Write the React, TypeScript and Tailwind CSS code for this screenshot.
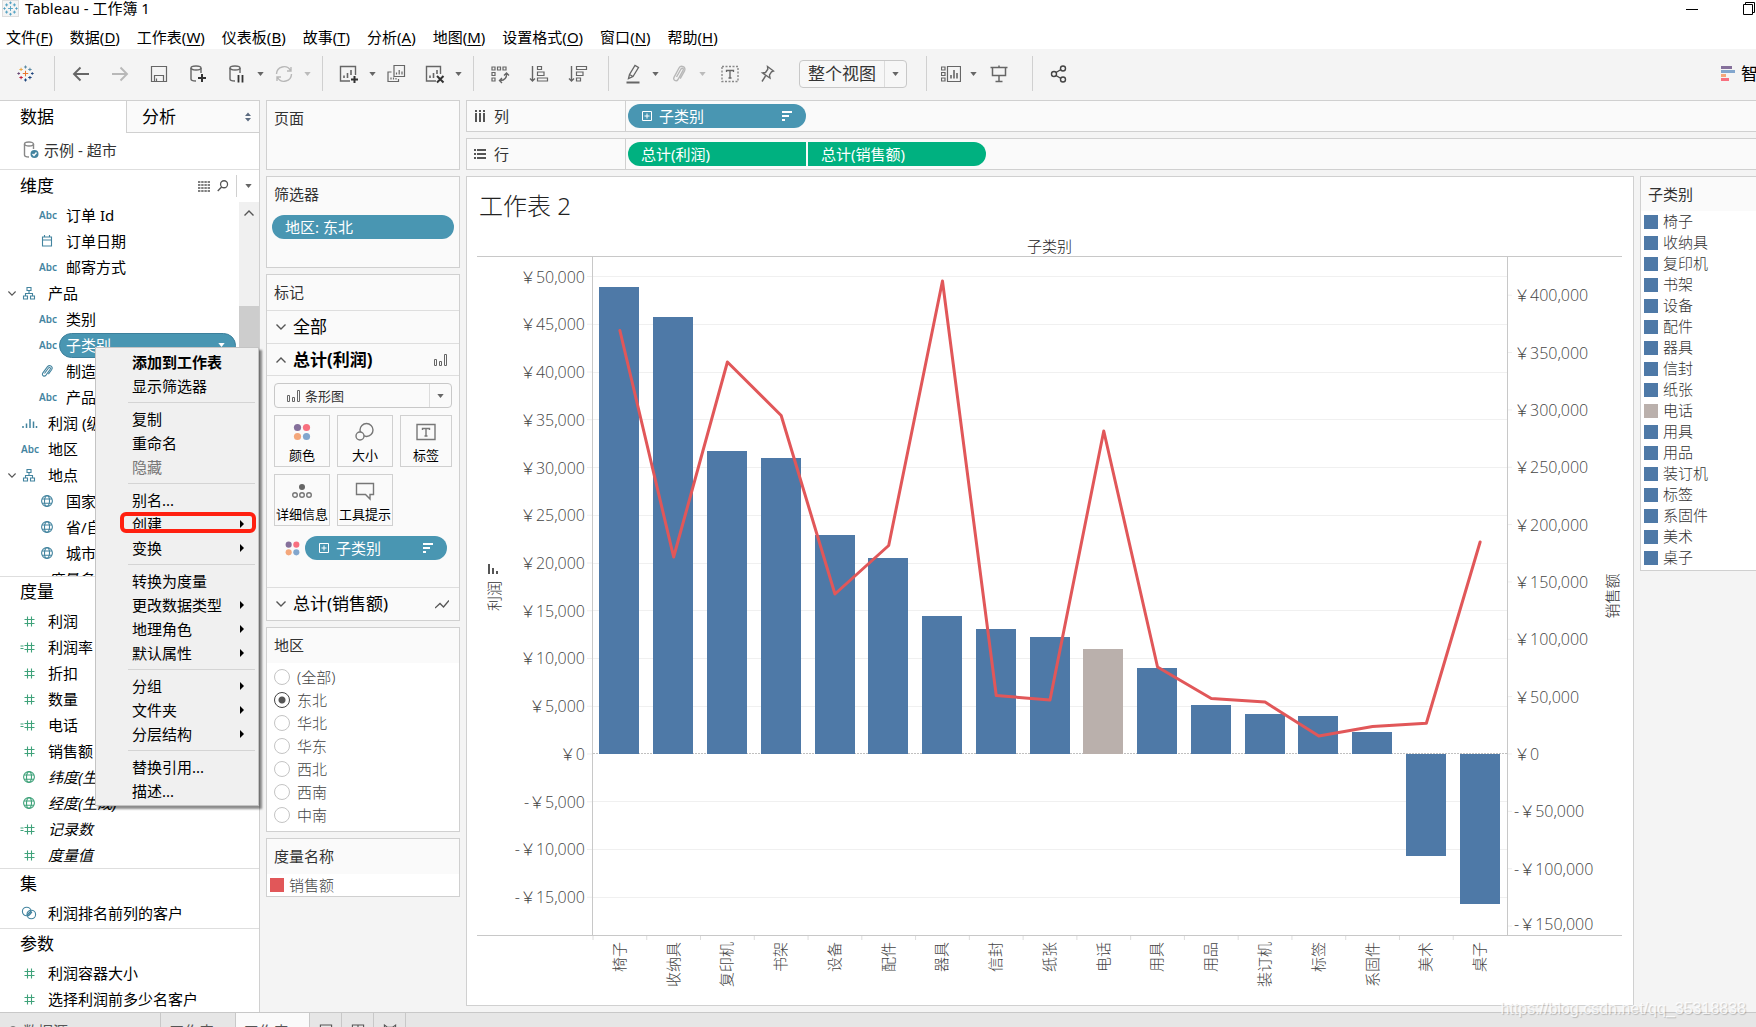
import React, { useState } from 'react';

type IconProps = { className?: string; children: React.ReactNode };

const Icon: React.FC<IconProps> = ({ className = 'size-5', children }) => (
    <svg viewBox="0 0 20 20" className={className} fill="none" stroke="currentColor" strokeWidth="1.4" aria-hidden="true">
        {children}
    </svg>
);

const Caret: React.FC<{ className?: string }> = ({ className = 'text-[#666]' }) => (
    <svg viewBox="0 0 8 5" className={`w-[7px] h-1 shrink-0 ${className}`} aria-hidden="true">
        <path d="M0 0h8L4 5z" fill="currentColor" />
    </svg>
);

const cross = (x: number, y: number, r: number, color: string) => (
    <path key={`${x}-${y}`} d={`M${x - r} ${y}h${2 * r}M${x} ${y - r}v${2 * r}`} stroke={color} strokeWidth="1.2" />
);

const Logo: React.FC<{ className?: string; colors: string[] }> = ({ className = 'size-5', colors }) => (
    <Icon className={className}>
        {cross(10, 10, 3.2, colors[0])}
        {cross(4.8, 5.2, 2, colors[1])}
        {cross(15.2, 5.2, 2, colors[2])}
        {cross(4.8, 14.8, 2, colors[3])}
        {cross(15.2, 14.8, 2, colors[4])}
        {cross(10, 2.4, 1.8, colors[2])}
        {cross(10, 17.6, 1.8, colors[4])}
        {cross(2, 10, 1.6, colors[5])}
        {cross(18, 10, 1.6, colors[4])}
    </Icon>
);

const BarsIcon: React.FC<{ className?: string }> = ({ className = 'size-4' }) => (
    <svg viewBox="0 0 16 16" className={`shrink-0 ${className}`} fill="none" stroke="#666" aria-hidden="true">
        <path d="M1.5 7.5h2v6h-2zM6.5 9.5h2v4h-2zM11.5 2.5h2v11h-2z" />
    </svg>
);

const FourDots: React.FC<{ className?: string }> = ({ className = 'size-5' }) => (
    <svg viewBox="0 0 20 20" className={`shrink-0 ${className}`} aria-hidden="true">
        <circle cx="5.5" cy="5.5" r="3.6" fill="#85709b" />
        <circle cx="14.5" cy="5.5" r="3.6" fill="#f8707f" />
        <circle cx="5.5" cy="14.5" r="3.6" fill="#f4a77b" />
        <circle cx="14.5" cy="14.5" r="3.6" fill="#82a6cd" />
    </svg>
);

const Chevron: React.FC<{ up?: boolean; className?: string }> = ({ up, className = 'w-[10px] h-[6px]' }) => (
    <svg viewBox="0 0 10 6" className={`shrink-0 ${className}`} fill="none" stroke="#555" strokeWidth="1.4" aria-hidden="true">
        <path d={up ? 'M.5 5.5L5 1l4.5 4.5' : 'M.5.5L5 5 9.5.5'} />
    </svg>
);

const FieldIcon: React.FC<{ kind: string }> = ({ kind }) => {
    if (kind === 'abc') {
        return <span className="w-[18px] text-[10px] leading-4 font-semibold text-[#43849f]">Abc</span>;
    }
    const color = kind.startsWith('m-') ? 'text-[#3fa27a]' : 'text-[#43849f]';
    return (
        <svg viewBox="0 0 16 16" className={`size-4 shrink-0 overflow-visible ${color}`} fill="none" stroke="currentColor" strokeWidth="1.1" aria-hidden="true">
            {kind === 'date' && <path d="M3.5 4h9v9h-9zM3.5 7h9M5.5 2v2M10.5 2v2" />}
            {kind === 'tree' && <path d="M6 2.5h4v3H6zM2.5 11h4v3h-4zM9.5 11h4v3h-4zM8 5.500v3M4.500 11V8.500h7V11" />}
            {kind === 'clip' && <path d="M5.500 10.500l4-5.500c1-1.300 2.600 0 1.700 1.300l-4.200 5.800c-1.700 2.200-4.800.2-3.100-2.200l4.600-6.200c2.300-2.600 6 .2 4.100 3l-3.200 4.400" />}
            {kind === 'bars' && <path d="M2 13v-2M5.500 13V8.500M9 13V4M12.500 13V6.500M15.500 13v-2" strokeWidth="1.5" />}
            {kind.endsWith('globe') && (
                <>
                    <circle cx="8" cy="8" r="5.400" />
                    <ellipse cx="8" cy="8" rx="2.500" ry="5.400" />
                    <path d="M3 6h10M3 10.200h10" />
                </>
            )}
            {kind.endsWith('num') && <path d="M6.500 3.500v10M10.500 3.500v10M3.500 6.500h10M3.500 10.500h10" />}
            {kind === 'm-calcnum' && <path d="M-.5 7h3M-.5 9.500h3" />}
            {kind === 'set' && (
                <>
                    <circle cx="5.700" cy="6.500" r="4.300" />
                    <circle cx="10.300" cy="9.500" r="4.300" />
                    <path d="M6 10l4-4M7 11l4-4" />
                </>
            )}
        </svg>
    );
};

type Field = { name: string; icon: string; level: number; italic?: boolean; open?: boolean };

const DIMENSIONS: Field[] = [
    { name: '订单 Id', icon: 'abc', level: 1 },
    { name: '订单日期', icon: 'date', level: 1 },
    { name: '邮寄方式', icon: 'abc', level: 1 },
    { name: '产品', icon: 'tree', level: 0, open: true },
    { name: '类别', icon: 'abc', level: 1 },
    { name: '子类别', icon: 'abc', level: 1 },
    { name: '制造商', icon: 'clip', level: 1 },
    { name: '产品名称', icon: 'abc', level: 1 },
    { name: '利润 (级)', icon: 'bars', level: 0 },
    { name: '地区', icon: 'abc', level: 0 },
    { name: '地点', icon: 'tree', level: 0, open: true },
    { name: '国家', icon: 'globe', level: 1 },
    { name: '省/自治区', icon: 'globe', level: 1 },
    { name: '城市', icon: 'globe', level: 1 },
    { name: '度量名称', icon: '', level: 0, italic: true },
];

const MEASURES: Field[] = [
    { name: '利润', icon: 'm-num', level: 0 },
    { name: '利润率', icon: 'm-calcnum', level: 0 },
    { name: '折扣', icon: 'm-num', level: 0 },
    { name: '数量', icon: 'm-num', level: 0 },
    { name: '电话', icon: 'm-calcnum', level: 0 },
    { name: '销售额', icon: 'm-num', level: 0 },
    { name: '纬度(生成)', icon: 'm-globe', level: 0, italic: true },
    { name: '经度(生成)', icon: 'm-globe', level: 0, italic: true },
    { name: '记录数', icon: 'm-calcnum', level: 0, italic: true },
    { name: '度量值', icon: 'm-num', level: 0, italic: true },
];

const SETS: Field[] = [{ name: '利润排名前列的客户', icon: 'set', level: 0 }];

const PARAMETERS: Field[] = [
    { name: '利润容器大小', icon: 'm-num', level: 0 },
    { name: '选择利润前多少名客户', icon: 'm-num', level: 0 },
];

const MENUS = [
    ['文件', 'F'], ['数据', 'D'], ['工作表', 'W'], ['仪表板', 'B'], ['故事', 'T'],
    ['分析', 'A'], ['地图', 'M'], ['设置格式', 'O'], ['窗口', 'N'], ['帮助', 'H'],
];

type MenuEntry = { label: string; bold?: boolean; disabled?: boolean; sub?: boolean; marked?: boolean };

const CONTEXT_MENU: MenuEntry[][] = [
    [{ label: '添加到工作表', bold: true }, { label: '显示筛选器' }],
    [{ label: '复制' }, { label: '重命名' }, { label: '隐藏', disabled: true }],
    [{ label: '别名...' }, { label: '创建', sub: true, marked: true }, { label: '变换', sub: true }],
    [{ label: '转换为度量' }, { label: '更改数据类型', sub: true }, { label: '地理角色', sub: true }, { label: '默认属性', sub: true }],
    [{ label: '分组', sub: true }, { label: '文件夹', sub: true }, { label: '分层结构', sub: true }],
    [{ label: '替换引用...' }, { label: '描述...' }],
];

const DATA = [
    { name: '椅子', profit: 48900, sales: 369200 },
    { name: '收纳具', profit: 45760, sales: 171750 },
    { name: '复印机', profit: 31730, sales: 341760 },
    { name: '书架', profit: 31000, sales: 295100 },
    { name: '设备', profit: 22930, sales: 139500 },
    { name: '配件', profit: 20520, sales: 181780 },
    { name: '器具', profit: 14450, sales: 412400 },
    { name: '信封', profit: 13090, sales: 51000 },
    { name: '纸张', profit: 12250, sales: 47100 },
    { name: '电话', profit: 11000, sales: 281600 },
    { name: '用具', profit: 9000, sales: 75850 },
    { name: '用品', profit: 5130, sales: 48400 },
    { name: '装订机', profit: 4190, sales: 45300 },
    { name: '标签', profit: 3980, sales: 15700 },
    { name: '系固件', profit: 2300, sales: 24000 },
    { name: '美术', profit: -10680, sales: 26800 },
    { name: '桌子', profit: -15700, sales: 184800 },
];

const REGIONS = ['(全部)', '东北', '华北', '华东', '西北', '西南', '中南'];

const PROFIT_TICKS = [50, 45, 40, 35, 30, 25, 20, 15, 10, 5, 0, -5, -10, -15].map(n => n * 1000);
const SALES_TICKS = [400, 350, 300, 250, 200, 150, 100, 50, 0, -50, -100, -150].map(n => n * 1000);

const profitY = (v: number) => ((52042 - v) / 70995) * 100;
const salesY = (v: number) => ((433304 - v) / 591107) * 100;
// keeps the lowest label inside the plot
const labelY = (y: number) => Math.min(y, 98.4);
const yen = (v: number) => `${v < 0 ? '-' : ''}\uFFE5${Math.abs(v).toLocaleString('en-US')}`;
const barColor = (name: string) => (name === '电话' ? '#bab0ac' : '#4e79a7');

const ToolButton: React.FC<{ label: string; className?: string; children: React.ReactNode }> = ({ label, className = 'w-[39px] text-[#666]', children }) => (
    <button type="button" aria-label={label} className={`h-8 flex shrink-0 items-center justify-center ${className}`}>
        {children}
    </button>
);

const MoreButton: React.FC<{ label: string; muted?: boolean }> = ({ label, muted }) => (
    <button type="button" aria-label={label} className="w-2 h-8 flex shrink-0 items-center justify-center">
        <Caret className={muted ? 'text-[#bbb]' : 'text-[#666]'} />
    </button>
);

const ToolDivider: React.FC = () => <span className="w-px h-[35px] ml-[11px] mr-1.5 shrink-0 bg-[#d0d0d0]" />;

const DatabaseShape = () => (
    <>
        <ellipse cx="8" cy="4" rx="5" ry="2" />
        <path d="M3 4v11c0 1.200 2 2 5 2M13 4v5" />
    </>
);

const Toolbar: React.FC = () => (
    <div role="toolbar" className="h-[51px] pb-0.5 shrink-0 flex items-center bg-[#f4f4f4] overflow-hidden">
        <button type="button" aria-label="开始页面" className="w-[43px] pl-2 flex shrink-0 justify-center">
            <Logo className="size-[17px]" colors={['#e8762d', '#eba844', '#5c8ba5', '#c72037', '#1f457e', '#6a4a77']} />
        </button>
        <ToolDivider />
        <ToolButton label="撤消">
            <Icon><path d="M18 10H3M9.500 3.500L3 10l6.500 6.500" strokeWidth="1.900" /></Icon>
        </ToolButton>
        <ToolButton label="重做" className="w-[39px] text-[#b8b8b8]">
            <Icon><path d="M2 10h15M10.500 3.500L17 10l-6.500 6.500" strokeWidth="1.900" /></Icon>
        </ToolButton>
        <ToolButton label="保存">
            <Icon><path d="M2.500 2.500h15v15h-15zM5.500 17v-5.500h9V17M7.500 17v-2.500" strokeWidth="1.200" /></Icon>
        </ToolButton>
        <ToolButton label="新建数据源">
            <Icon><DatabaseShape /><path d="M14 10v8M10 14h8" stroke="#333" strokeWidth="2" /></Icon>
        </ToolButton>
        <ToolButton label="暂停自动更新">
            <Icon><DatabaseShape /><path d="M11.500 11v7.500M15.500 11v7.500" stroke="#333" strokeWidth="1.800" /></Icon>
        </ToolButton>
        <MoreButton label="更新选项" />
        <ToolButton label="刷新" className="w-[39px] text-[#b8b8b8]">
            <Icon><path d="M2.500 10a7.500 7.500 0 0 1 14-3.500M17.500 10a7.500 7.500 0 0 1-14 3.500M17 3v4h-4M3 17v-4h4" /></Icon>
        </ToolButton>
        <MoreButton label="刷新选项" muted />
        <ToolDivider />
        <ToolButton label="新建工作表">
            <Icon><path d="M11 17H1.500V2.500h15V11" /><path d="M5 14v-2.500M8.500 14V9M12 11V6" strokeWidth="1.600" /><path d="M15.500 12v7M12 15.500h7" stroke="#333" strokeWidth="2" /></Icon>
        </ToolButton>
        <MoreButton label="新建选项" />
        <ToolButton label="复制工作表">
            <Icon><path d="M8 1.500h10.500v11H8zM5.500 8H2v9.500h10.500V15" strokeWidth="1.200" /><path d="M10.500 10.500v-2M13.200 10.500V6M16 10.500v-3M5 15.500v-2M7.500 15.500v-2M10 15.500v-1.500" strokeWidth="1.200" /></Icon>
        </ToolButton>
        <ToolButton label="清除工作表">
            <Icon><path d="M11 17H1.500V2.500h14V10" /><path d="M5 14v-2.500M8.500 14V9M12 10V6" strokeWidth="1.600" /><path d="M12 12l6.500 6.500M18.500 12L12 18.500" stroke="#333" strokeWidth="2" /></Icon>
        </ToolButton>
        <MoreButton label="清除选项" />
        <ToolDivider />
        <ToolButton label="交换行和列">
            <Icon><path d="M2 3h3v3H2zM7.500 3h3v3h-3zM13 3h3v3h-3zM2 8.500h3v3H2zM2 14h3v3H2z" strokeWidth="1.200" /><path d="M16.500 9.500c.5 4-2 7-6 7M14 11.500l2.500-2.500 2.500 2.500M12 14l-2.500 2.500L12 19" /></Icon>
        </ToolButton>
        <ToolButton label="升序排序">
            <Icon><path d="M3.500 2v15M1 14.500L3.500 17 6 14.500" /><path d="M8.500 2.500h4v3h-4zM8.500 8h6.500v3.500H8.500zM8.500 14h10v3h-10z" strokeWidth="1.200" /></Icon>
        </ToolButton>
        <ToolButton label="降序排序">
            <Icon><path d="M3.500 2v15M1 14.500L3.500 17 6 14.500" /><path d="M8.500 2.500h10v3h-10zM8.500 8h6.500v3.500H8.500zM8.500 14h4v3h-4z" strokeWidth="1.200" /></Icon>
        </ToolButton>
        <ToolDivider />
        <ToolButton label="突出显示" className="w-9 text-[#666]">
            <Icon><path d="M5.500 14.500l1-4 5.500-9 3.500 2-5.500 9zM6.500 10.500l3.500 2" strokeWidth="1.300" /><path d="M3.500 18.500h13" strokeWidth="2" /></Icon>
        </ToolButton>
        <MoreButton label="突出显示选项" />
        <ToolButton label="组成员" className="w-[39px] text-[#b8b8b8]">
            <Icon><path d="M7.500 13l4.500-8c1-1.500 3-.5 2.200 1.200L9 15.500c-1.600 2.500-5.500.5-4-2.200L10 4c2-3.500 7.500-1 5.500 3l-4.300 7.700" /></Icon>
        </ToolButton>
        <MoreButton label="分组选项" muted />
        <ToolButton label="显示标记标签" className="w-[39px] ml-1 text-[#888]">
            <Icon><path d="M2 2.500h16v15H2z" strokeDasharray="2 1.500" /><path d="M6.500 8V6.500h7V8M10 6.500v7.500M8.500 14h3" stroke="#666" strokeWidth="1.300" /></Icon>
        </ToolButton>
        <ToolButton label="固定轴" className="w-9 text-[#666]">
            <Icon><path d="M10.500 2.500l6 4.500-2 .8-2 3.200.5 3-7.500-5 3-.5 2.300-3.300zM8.500 12L5 17.500" /></Icon>
        </ToolButton>
        <div className="w-[108px] h-7 ml-3.5 mr-2 flex shrink-0 items-center border border-[#c8c8c8] rounded-sm bg-[#f7f7f7]">
            <select aria-label="适合" className="flex-1 min-w-0 pl-2 appearance-none text-[17px] leading-6 text-[#333] outline-none">
                <option>整个视图</option>
            </select>
            <span className="w-[22px] h-full flex items-center justify-center border-l border-[#dcdcdc] pointer-events-none">
                <Caret />
            </span>
        </div>
        <ToolDivider />
        <ToolButton label="显示/隐藏卡" className="w-9 text-[#666]">
            <Icon><path d="M.5 3h3.500v3H.5zM.5 8.500h3.500v3H.5zM.5 14h3.500v3H.5zM6.500 2.500h13v15h-13z" strokeWidth="1.200" /><path d="M10 14.500V11M13 14.500V6M16 14.500V9" strokeWidth="1.600" /></Icon>
        </ToolButton>
        <MoreButton label="卡选项" />
        <ToolButton label="演示模式" className="w-11 text-[#666]">
            <Icon><path d="M1.500 3.500h17M3.500 3.500v8h13v-8M10 1.500v2M10 11.500V17M6.500 17.500h7" strokeWidth="1.500" /></Icon>
        </ToolButton>
        <ToolDivider />
        <ToolButton label="共享" className="w-[39px] text-[#444]">
            <Icon><circle cx="5" cy="10" r="2.500" /><circle cx="14" cy="4.500" r="2.500" /><circle cx="14" cy="15.500" r="2.500" /><path d="M7 8.500l5-3M7 11.500l5 3" /></Icon>
        </ToolButton>
        <button type="button" className="ml-auto w-[35px] flex shrink-0 items-center gap-1.5 overflow-hidden whitespace-nowrap text-[17px] leading-6">
            <svg viewBox="0 0 14 16" className="w-3.5 h-4 shrink-0" aria-hidden="true">
                <path d="M0 0h11v3H0z" fill="#85709b" />
                <path d="M0 4h14v3H0z" fill="#82a6cd" />
                <path d="M0 8h5v3H0z" fill="#f4a77b" />
                <path d="M0 12h8v3H0z" fill="#f8707f" />
            </svg>
            智能显示
        </button>
    </div>
);

const FieldRow: React.FC<{ field: Field; selected?: boolean }> = ({ field, selected }) => (
    <li className={`h-[26px] flex shrink-0 items-center whitespace-nowrap ${field.level ? 'pl-[18px]' : ''}`}>
        <span className={`w-[21px] flex shrink-0 ${field.level ? '' : 'pl-2'}`}>{field.open && <Chevron className="w-2 h-[5px]" />}</span>
        <span className={`flex shrink-0 ${selected ? 'w-5' : 'w-[27px]'}`}>
            <FieldIcon kind={field.icon} />
        </span>
        {selected ? (
            <span className="flex-1 h-[25px] mr-[3px] pl-[6px] pr-2.5 flex items-center justify-between rounded-full border border-[#3d809c] bg-[#4996b2] text-white">
                {field.name}
                <Caret className="text-white" />
            </span>
        ) : (
            <span className={field.italic ? 'italic' : ''}>{field.name}</span>
        )}
    </li>
);

const SidebarSection: React.FC<{ title: string; fields: Field[]; className?: string }> = ({ title, fields, className = '' }) => (
    <section className={`shrink-0 border-t border-[#dedede] ${className}`}>
        <h2 className="h-[31px] pl-5 pb-px flex items-center text-[17px]">{title}</h2>
        <ul>
            {fields.map(f => <FieldRow key={f.name} field={f} />)}
        </ul>
    </section>
);

const Sidebar: React.FC = () => (
    <aside className="w-[260px] shrink-0 flex flex-col border-t border-r border-[#d0d0d0] bg-white text-[15px] leading-5">
        <div className="h-8 flex shrink-0 text-[17px]">
            <button type="button" className="w-[126px] pl-5 text-left">数据</button>
            <button type="button" className="flex-1 pl-[15px] pr-2 flex items-center justify-between border-l border-b border-[#d0d0d0] bg-[#fafafa]">
                分析
                <svg viewBox="0 0 6 10" className="w-1.5 h-2.5" aria-hidden="true"><path d="M0 4l3-3.500L6 4zM0 6l3 3.500L6 6z" fill="#5c6b80" /></svg>
            </button>
        </div>
        <div className="h-[37px] pl-[22px] pb-0.5 flex shrink-0 items-center gap-0.5 border-b border-[#dedede] text-[#333]">
            <Icon>
                <ellipse cx="7" cy="4" rx="4.500" ry="2" stroke="#888" />
                <path d="M2.500 4v11c0 1.200 2 2 4.500 2M11.500 4v5" stroke="#888" />
                <circle cx="12.500" cy="14" r="4" fill="#43849f" stroke="none" />
                <path d="M10.500 14l1.500 1.500 2.500-3" stroke="#fff" />
            </Icon>
            示例 - 超市
        </div>
        <div className="h-8 pl-5 flex shrink-0 items-center">
            <h2 className="text-[17px]">维度</h2>
            <button type="button" aria-label="列表视图" className="ml-auto">
                <svg viewBox="0 0 12 11" className="w-3 h-[11px]" aria-hidden="true">
                    <path d="M0 1h12M0 4h12M0 7h12M0 10h12" stroke="#555" strokeWidth="1.500" strokeDasharray="2.400 .8" />
                </svg>
            </button>
            <button type="button" aria-label="查找字段" className="ml-1.5 text-[#555]">
                <Icon className="size-3.5"><circle cx="11.500" cy="7.500" r="5" strokeWidth="1.800" /><path d="M8 11.500L2.500 17" strokeWidth="2" /></Icon>
            </button>
            <span className="w-px h-[22px] ml-1.5 bg-[#d0d0d0]" />
            <button type="button" aria-label="维度菜单" className="w-[22px] flex justify-center"><Caret /></button>
        </div>
        <div className="flex-1 min-h-0 flex">
            <ul className="flex-1 overflow-hidden flex flex-col">
                {DIMENSIONS.map(f => <FieldRow key={f.name} field={f} selected={f.name === '子类别'} />)}
            </ul>
            <div className="w-5 flex flex-col items-center bg-[#f0f0f0]">
                <span className="h-[21px] flex items-center"><Chevron up /></span>
                <span className="w-full h-40 mt-[83px] bg-[#cdcdcd]" />
            </div>
        </div>
        <SidebarSection title="度量" fields={MEASURES} />
        <SidebarSection title="集" fields={SETS} className="pb-0.5" />
        <SidebarSection title="参数" fields={PARAMETERS} />
    </aside>
);

const ContextMenu: React.FC = () => (
    <div role="menu" className="absolute left-[95px] top-[347px] w-[164px] py-[2px] border border-[#c4c4c4] bg-[#f0f0f0] text-[15px] leading-6 shadow-[3px_3px_2px_rgba(0,0,0,0.45)]">
        {CONTEXT_MENU.map((group, i) => (
            <div key={group[0].label}>
                {i > 0 && <div className="h-px mt-1 mb-1 ml-8 mr-[3px] border-t border-[#d4d4d4]" />}
                {group.map(item => (
                    <button
                        key={item.label}
                        type="button"
                        role="menuitem"
                        disabled={item.disabled}
                        className={`relative w-full h-6 pl-9 pr-[14px] flex items-center justify-between text-left ${item.bold ? 'font-bold' : ''} ${item.disabled ? 'text-[#777]' : 'text-black'}`}
                    >
                        {item.label}
                        {item.sub && (
                            <svg viewBox="0 0 4 8" className="w-1 h-2" aria-hidden="true"><path d="M0 0l4 4-4 4z" fill="#000" /></svg>
                        )}
                        {item.marked && <span className="absolute left-6 right-[2px] top-0 bottom-[3px] border-4 border-[#ff2010] rounded-md" />}
                    </button>
                ))}
            </div>
        ))}
    </div>
);

const PillSortIcon = () => (
    <svg viewBox="0 0 10 10" className="size-2.5" aria-hidden="true"><path d="M0 0h10v2H0zM0 4h7v2H0zM0 8h3v2H0z" fill="#fff" /></svg>
);

const PillPlusIcon = () => (
    <svg viewBox="0 0 10 10" className="size-2.5" fill="none" stroke="#fff" aria-hidden="true"><path d="M.5.5h9v9h-9zM5 2.500v5M2.500 5h5" /></svg>
);

const CategoryPill: React.FC<{ className: string }> = ({ className }) => (
    <button type="button" className={`h-6 px-3.5 flex items-center gap-[7px] rounded-full bg-[#4996b2] text-white ${className}`}>
        <PillPlusIcon />
        <span className="flex-1 text-left">子类别</span>
        <PillSortIcon />
    </button>
);

const MarkButton: React.FC<{ label: string; children: React.ReactNode }> = ({ label, children }) => (
    <button type="button" className="h-[52px] pt-1.5 pb-px flex flex-col items-center justify-between border border-[#d0d0d0] bg-[#fafafa] text-[13px] leading-5 whitespace-nowrap">
        {children}
        {label}
    </button>
);

const Shelves: React.FC = () => {
    const [region, setRegion] = useState<string>('东北');

    return (
        <div className="w-[194px] shrink-0 flex flex-col gap-1.5 text-[15px] leading-5 text-[#333]">
            <section className="h-[70px] pl-[7px] pt-[7px] border border-[#d0d0d0] bg-[#fafafa]">
                <h3>页面</h3>
            </section>
            <section className="h-[92px] px-[5px] pt-[7px] border border-[#d0d0d0] bg-[#fafafa]">
                <h3 className="pl-0.5">筛选器</h3>
                <button type="button" className="w-full h-6 mt-[11px] pl-[13px] flex items-center rounded-full bg-[#4996b2] text-white">地区: 东北</button>
            </section>
            <section className="border border-[#d0d0d0] bg-[#fafafa]">
                <h3 className="h-9 pl-[7px] pb-0.5 flex items-center border-b border-[#dedede]">标记</h3>
                <button type="button" className="w-full h-[33px] pl-[9px] flex items-center gap-[7px] border-b border-[#dedede] text-[17px] text-black">
                    <Chevron />全部
                </button>
                <button type="button" className="w-full h-8 pl-[9px] pr-2.5 flex items-center gap-[7px] border-b border-[#dedede] text-[17px] font-bold text-black">
                    <Chevron up />
                    <span className="flex-1 text-left">总计(利润)</span>
                    <BarsIcon />
                </button>
                <div className="px-[7px] pt-[7px] pb-[27px]">
                    <div className="h-[25px] pl-[11px] flex items-center gap-[3px] border border-[#c8c8c8] rounded-sm">
                        <BarsIcon />
                        <select aria-label="标记类型" className="flex-1 min-w-0 appearance-none text-[13px] text-[#333] outline-none">
                            <option>条形图</option>
                        </select>
                        <span className="w-[22px] h-full flex items-center justify-center border-l border-[#dcdcdc] pointer-events-none"><Caret /></span>
                    </div>
                    <div className="mt-[7px] grid grid-cols-[56px_56px_52px] gap-[7px] text-black">
                        <MarkButton label="颜色"><FourDots /></MarkButton>
                        <MarkButton label="大小">
                            <Icon className="size-5 text-[#777]"><circle cx="11.500" cy="8" r="6.500" /><circle cx="5" cy="14" r="4" fill="#fafafa" /></Icon>
                        </MarkButton>
                        <MarkButton label="标签">
                            <Icon className="size-5 text-[#777]"><path d="M1 2.500h18v15H1z" /><path d="M6.500 8V6.500h7V8M10 6.500v7.500M8.500 14h3" /></Icon>
                        </MarkButton>
                        <MarkButton label="详细信息">
                            <Icon className="size-5 text-[#777] overflow-visible"><circle cx="10" cy="6" r="3" fill="#666" stroke="none" /><circle cx="3" cy="14" r="2.300" /><circle cx="10" cy="14" r="2.300" /><circle cx="17" cy="14" r="2.300" /></Icon>
                        </MarkButton>
                        <MarkButton label="工具提示">
                            <Icon className="size-5 text-[#777]"><path d="M1.500 2.500h17v11h-3.500V18l-4.500-4.500h-9z" /></Icon>
                        </MarkButton>
                    </div>
                    <div className="mt-2.5 pl-2.5 pr-[5px] flex items-center gap-1">
                        <FourDots className="size-[17px]" />
                        <CategoryPill className="flex-1" />
                    </div>
                </div>
                <button type="button" className="w-full h-[33px] pl-[9px] pr-2.5 flex items-center gap-[7px] border-t border-[#dedede] text-[17px] text-black">
                    <Chevron />
                    <span className="flex-1 text-left">总计(销售额)</span>
                    <svg viewBox="0 0 14 9" className="w-3.5 h-[9px]" fill="none" stroke="#555" strokeWidth="1.300" aria-hidden="true"><path d="M0 8l5-4.500 3.500 3.500L14 .5" /></svg>
                </button>
            </section>
            <fieldset className="pb-[5px] border border-[#d0d0d0] bg-white min-w-0">
                <div className="h-[35px] mb-0.5 pl-[7px] pb-0.5 flex items-center bg-[#fafafa]">地区</div>
                {REGIONS.map(name => (
                    <label key={name} className="h-[23px] pl-[7px] flex items-center gap-[7px] text-[#444] font-light">
                        <input
                            type="radio"
                            name="region"
                            checked={region === name}
                            onChange={() => setRegion(name)}
                            className="appearance-none size-4 rounded-full border border-[#c4c4c4] bg-white checked:border-[#444] checked:bg-[radial-gradient(circle,#555_0_3px,#fff_4px)]"
                        />
                        {name}
                    </label>
                ))}
            </fieldset>
            <section className="border border-[#d0d0d0] bg-white">
                <h3 className="h-[35px] pl-[7px] pb-0.5 flex items-center bg-[#fafafa]">度量名称</h3>
                <div className="h-[22px] pl-[3px] flex items-center gap-[5px] font-light text-[#444]">
                    <span className="size-3.5 bg-[#e15759]" />销售额
                </div>
            </section>
        </div>
    );
};

const Chart: React.FC = () => {
    const step = 100 / DATA.length;
    const points = DATA.map((d, i) => `${(i + 0.5) * step},${salesY(d.sales)}`).join(' ');

    return (
        <div className="flex-1 min-h-0 pl-2.5 pr-[11px] flex flex-col">
            <div className="h-[19px] text-center text-[15px] leading-[18px] font-light text-[#222]">子类别</div>
            <div className="flex-1 min-h-0 flex border-y border-[#c8c8c8]">
                <svg className="w-[116px] h-full shrink-0 border-r border-[#c8c8c8] fill-[#444] text-[16px] font-light" fontFamily="'Open Sans', 'Noto Sans CJK SC', sans-serif">
                    {PROFIT_TICKS.map(v => (
                        <React.Fragment key={v}>
                            <text x="108" y={`${profitY(v)}%`} textAnchor="end" dominantBaseline="central">{yen(v)}</text>
                            <line x1="110" x2="115" y1={`${profitY(v)}%`} y2={`${profitY(v)}%`} stroke="#eee" />
                        </React.Fragment>
                    ))}
                    <svg x="17" y="50%" className="overflow-visible text-[15px] fill-[#333]">
                        <text transform="rotate(-90)" textAnchor="middle" dominantBaseline="central">利润</text>
                        <path d="M-6 -32h2v10h-2zM-2 -28h2v6h-2zM2 -25h2v3h-2z" fill="#555" />
                    </svg>
                </svg>
                <svg className="flex-1 min-w-0 h-full">
                    {PROFIT_TICKS.filter(v => v !== 0).map(v => (
                        <line key={v} x1="0" x2="100%" y1={`${profitY(v)}%`} y2={`${profitY(v)}%`} stroke="#f0f0f0" shapeRendering="crispEdges" />
                    ))}
                    <line x1="0" x2="100%" y1={`${profitY(0)}%`} y2={`${profitY(0)}%`} stroke="#c0c0c0" strokeDasharray="2 1" shapeRendering="crispEdges" />
                    {DATA.map((d, i) => (
                        <rect
                            key={d.name}
                            x={`${(i + 0.12) * step}%`}
                            width={`${step * 0.744}%`}
                            y={`${profitY(Math.max(d.profit, 0))}%`}
                            height={`${(Math.abs(d.profit) / 70995) * 100}%`}
                            fill={barColor(d.name)}
                            shapeRendering="crispEdges"
                        />
                    ))}
                    <svg viewBox="0 0 100 100" width="100%" height="100%" preserveAspectRatio="none">
                        <polyline points={points} fill="none" stroke="#e15759" strokeWidth="3" strokeLinejoin="round" strokeLinecap="round" vectorEffect="non-scaling-stroke" />
                    </svg>
                </svg>
                <svg className="w-[115px] h-full shrink-0 border-l border-[#c8c8c8] fill-[#444] text-[16px] font-light" fontFamily="'Open Sans', 'Noto Sans CJK SC', sans-serif">
                    {SALES_TICKS.map(v => (
                        <React.Fragment key={v}>
                            <line x1="0" x2="4" y1={`${salesY(v)}%`} y2={`${salesY(v)}%`} stroke="#eee" />
                            <text x="6" y={`${labelY(salesY(v))}%`} dominantBaseline="central">{yen(v)}</text>
                        </React.Fragment>
                    ))}
                    <svg x="104" y="50%" className="overflow-visible text-[15px] fill-[#333]">
                        <text transform="rotate(-90)" textAnchor="middle" dominantBaseline="central">销售额</text>
                    </svg>
                </svg>
            </div>
            <svg className="h-[69px] ml-[116px] mr-[115px] shrink-0 overflow-visible fill-[#444] text-[15px] font-light">
                {DATA.map((d, i) => (
                    <React.Fragment key={d.name}>
                        <line x1={`${i * step}%`} x2={`${i * step}%`} y1="0" y2="4" stroke="#ddd" />
                        <svg x={`${(i + 0.48) * step}%`} y="6" className="overflow-visible">
                            <text transform="rotate(-90)" textAnchor="end" dominantBaseline="central">{d.name}</text>
                        </svg>
                    </React.Fragment>
                ))}
            </svg>
        </div>
    );
};

const ShelfRow: React.FC<{ label: string; icon: React.ReactNode; children: React.ReactNode }> = ({ label, icon, children }) => (
    <div className="h-8 shrink-0 flex items-center border-y border-l border-[#d0d0d0] bg-[#fafafa] text-[15px] leading-5 text-[#333]">
        <div className="w-[159px] h-full pl-[7px] mr-0.5 flex shrink-0 items-center gap-2 border-r border-[#d0d0d0]">
            {icon}
            {label}
        </div>
        {children}
    </div>
);

const Workspace: React.FC = () => (
    <main className="flex-1 min-w-0 flex flex-col gap-1.5">
        <ShelfRow
            label="列"
            icon={<svg viewBox="0 0 12 12" className="size-3" aria-hidden="true"><path d="M1 0h2v2H1zM5 0h2v2H5zM9 0h2v2H9zM1 3h2v9H1zM5 3h2v9H5zM9 3h2v9H9z" fill="#555" /></svg>}
        >
            <CategoryPill className="w-[178px]" />
        </ShelfRow>
        <ShelfRow
            label="行"
            icon={<svg viewBox="0 0 12 12" className="size-3" aria-hidden="true"><path d="M0 1h2v2H0zM0 5h2v2H0zM0 9h2v2H0zM3 1h9v2H3zM3 5h9v2H3zM3 9h9v2H3z" fill="#555" /></svg>}
        >
            <button type="button" className="w-[178px] h-6 pl-[13px] text-left rounded-l-full bg-[#00b180] text-white">总计(利润)</button>
            <button type="button" className="w-[178px] h-6 ml-0.5 pl-[13px] text-left rounded-r-full bg-[#00b180] text-white">总计(销售额)</button>
        </ShelfRow>
        <div className="flex-1 min-h-0 flex items-start gap-1.5">
            <section className="flex-1 min-w-0 h-full flex flex-col border border-[#d0d0d0] bg-white">
                <h1 className="h-[60px] pl-3 pb-0.5 shrink-0 flex items-center text-[24px] font-light text-[#222]">工作表 2</h1>
                <Chart />
            </section>
            <section className="w-[116px] shrink-0 pb-[2px] border-y border-l border-[#d0d0d0] bg-white text-[15px] leading-[21px] text-[#333]">
                <h3 className="h-[34px] pl-[7px] flex items-center bg-[#fafafa]">子类别</h3>
                <ul className="font-light text-[#333]">
                    {DATA.map(d => (
                        <li key={d.name} className="h-[21px] pl-[3px] flex items-center gap-[5px]">
                            <span className="size-3.5" style={{ backgroundColor: barColor(d.name) }} />
                            {d.name}
                        </li>
                    ))}
                </ul>
            </section>
        </div>
    </main>
);

const SheetTabs: React.FC = () => (
    <footer className="h-[15px] shrink-0 overflow-hidden bg-[#e6e6e6] border-t border-[#c8c8c8] text-[15px] text-[#555]">
        <nav className="h-9 flex whitespace-nowrap">
            <button type="button" className="w-[161px] pl-[7px] flex items-center gap-1 border-r border-[#c8c8c8]">
                <Icon className="size-3"><circle cx="10" cy="10" r="7" strokeWidth="2" /></Icon>数据源
            </button>
            <button type="button" className="w-[75px] border-r border-[#c8c8c8]">工作表 1</button>
            <button type="button" className="w-[74px] border-r border-[#c8c8c8] bg-[#fafafa]">工作表 2</button>
            {['新建工作表标签', '新建仪表板标签', '新建故事标签'].map((label, i) => (
                <button key={label} type="button" aria-label={label} className="w-8 flex items-center justify-center border-r border-[#c8c8c8]">
                    <Icon className="size-4">
                        {i === 0 && <path d="M3 2.500h14v15H3z" />}
                        {i === 1 && <path d="M3 2.500h14v15H3zM10 2.500v15M3 10h14" />}
                        {i === 2 && <path d="M3 2.500l4 3h6l4-3v15H3z" />}
                    </Icon>
                </button>
            ))}
        </nav>
    </footer>
);

const App: React.FC = () => {
    return (
        <div className="relative h-screen flex flex-col overflow-hidden bg-[#f4f4f4] text-black font-['Noto_Sans','Noto_Sans_CJK_SC',sans-serif]">
            <header className="h-[49px] shrink-0 bg-white text-[15px]">
                <div className="h-[25px] pl-0.5 pb-2 flex items-center gap-1.5">
                    <Logo className="size-[17px] shrink-0 border border-[#ddd] bg-[#f4f4f4]" colors={['#4b9dc0', '#4b9dc0', '#4b9dc0', '#4b9dc0', '#4b9dc0', '#4b9dc0']} />
                    <span>Tableau - 工作簿 1</span>
                    <button type="button" aria-label="最小化" className="ml-auto mr-[39px]">
                        <svg viewBox="0 0 12 12" className="size-3" aria-hidden="true"><path d="M0 6h12" stroke="#000" strokeWidth="1" shapeRendering="crispEdges" /></svg>
                    </button>
                    <button type="button" aria-label="还原" className="shrink-0">
                        <svg viewBox="0 0 13 13" className="size-[13px]" fill="none" stroke="#000" aria-hidden="true"><path d="M.5 2.500h9v10h-9zM2.500 2.500v-2h9v10h-2" /></svg>
                    </button>
                </div>
                <nav className="pl-1.5 flex gap-[17px] leading-6">
                    {MENUS.map(([name, key]) => (
                        <button key={key} type="button" className="whitespace-nowrap">
                            {name}(<span className="underline underline-offset-2">{key}</span>)
                        </button>
                    ))}
                </nav>
            </header>
            <Toolbar />
            <div className="flex-1 min-h-0 flex">
                <Sidebar />
                <div className="flex-1 min-w-0 pl-1.5 pb-1.5 flex gap-1.5">
                    <Shelves />
                    <Workspace />
                </div>
            </div>
            <SheetTabs />
            <ContextMenu />
            <p className="absolute right-2.5 bottom-1.5 font-['Liberation_Sans',sans-serif] text-[16px] leading-6 text-white/80 [text-shadow:1px_1px_1px_rgba(0,0,0,0.2)] pointer-events-none">
                https://blog.csdn.net/qq_35318838
            </p>
        </div>
    );
};

export default App;
